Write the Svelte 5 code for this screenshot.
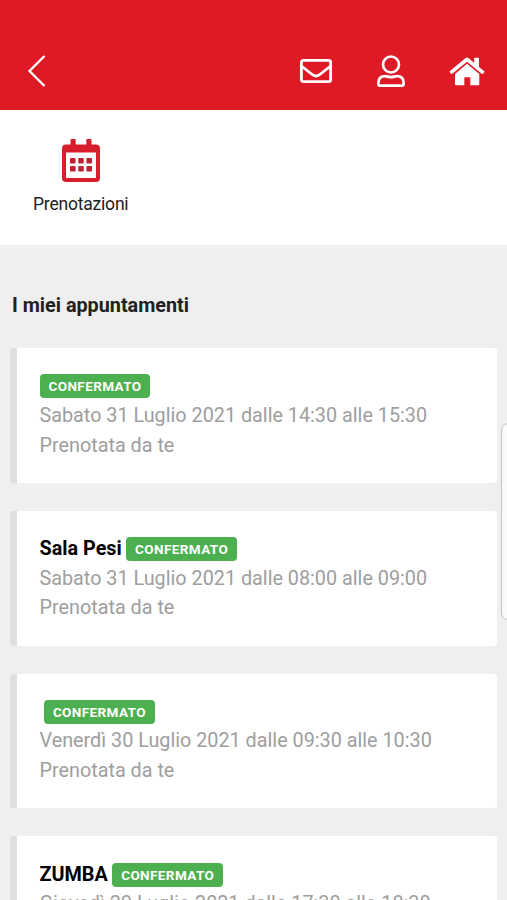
<script>
	const appointments = [
		{ title: '', date: 'Sabato 31 Luglio 2021 dalle 14:30 alle 15:30' },
		{ title: 'Sala Pesi', date: 'Sabato 31 Luglio 2021 dalle 08:00 alle 09:00' },
		{ title: '', date: 'Venerdì 30 Luglio 2021 dalle 09:30 alle 10:30', spaced: true },
		{ title: 'ZUMBA', date: 'Giovedì 29 Luglio 2021 dalle 17:30 alle 18:30' }
	];
</script>

<div class="screen">
	<header>
		<button class="back" aria-label="Indietro">
			<svg width="20" height="34" viewBox="0 0 20 34">
				<path d="M17.5 2 2.5 17l15 15" fill="none" stroke="#fff" stroke-width="2.3" />
			</svg>
		</button>
		<nav>
			<button aria-label="Messaggi">
				<svg width="32" height="24" viewBox="0 0 32 24" fill="none" stroke="#fff" stroke-width="2.8">
					<rect x="1.4" y="1.4" width="29.2" height="21.2" rx="1.8" />
					<path d="M2 7.5l10.2 8q3.8 3 7.6 0L30 7.5" />
				</svg>
			</button>
			<button aria-label="Profilo">
				<svg width="28" height="32" viewBox="0 0 28 32" fill="none" stroke="#fff" stroke-width="2.7">
					<circle cx="14" cy="9.5" r="8" />
					<path
						d="M8.3 21.2c2 0 3 .9 5.7.9s3.7-.9 5.7-.9c4.6 0 6.9 2.8 6.9 6.7v1.2q0 1.5-1.5 1.5H2.9q-1.5 0-1.5-1.5v-1.2c0-3.9 2.3-6.7 6.9-6.7z"
					/>
				</svg>
			</button>
			<button aria-label="Home">
				<svg width="36" height="29" viewBox="0 0 36 29" fill="#fff">
					<path d="M18 6.8 30.3 17v10.3q0 1-1 1H21.3v-8h-6v8H7q-1 0-1-1V17z" />
					<path
						d="M16.3 1.3q1.7-1.4 3.4 0l5.5 4.6V1.4q0-.7.7-.7H29.3q.7 0 .7.7v8.5l5 4.2q.7.6.1 1.3l-1.1 1.3q-.6.7-1.3.1L18 4.7 3.3 16.8q-.7.6-1.3-.1L.9 15.4q-.6-.7.1-1.3z"
					/>
				</svg>
			</button>
		</nav>
	</header>

	<section class="shortcuts">
		<a class="shortcut" href="#prenotazioni">
			<svg width="38" height="44" viewBox="0 0 38 44">
				<path
					fill="#d81e2c"
					fill-rule="evenodd"
					d="M8.5 1q0-1 1-1h3.2q1 0 1 1v4.5h10.6V1q0-1 1-1h3.2q1 0 1 1v4.5H34q4 0 4 4V39q0 4-4 4H4q-4 0-4-4V9.5q0-4 4-4h4.5zM4 13.5v24.7q0 .8.8.8h28.4q.8 0 .8-.8V13.5z"
				/>
				<g fill="#bd2132">
					{#each [8, 16.2, 24.4] as x}
						{#each [19, 27] as y}
							<rect {x} {y} width="5.6" height="5.6" rx="1" />
						{/each}
					{/each}
				</g>
			</svg>
			<span>Prenotazioni</span>
		</a>
	</section>

	<main>
		<h1>I miei appuntamenti</h1>
		<div class="list">
			{#each appointments as item}
				<article>
					<div class="title">
						{#if item.title}<strong>{item.title}</strong>{/if}
						<span class="badge" class:spaced={item.title || item.spaced}>CONFERMATO</span>
					</div>
					<p>{item.date}</p>
					<p>Prenotata da te</p>
				</article>
			{/each}
		</div>
	</main>

	<div class="edge-handle"></div>
</div>

<style>
	:global(body) {
		margin: 0;
		overflow: hidden;
	}

	.screen {
		position: relative;
		height: 900px;
		overflow: hidden;
		background: #efefef;
		color: #212121;
		font-family: Roboto, sans-serif;
	}

	header {
		box-sizing: border-box;
		height: 110px;
		padding: 32px 22px 0 27px;
		display: flex;
		align-items: center;
		justify-content: space-between;
		background: #de1a27;
	}

	button {
		display: flex;
		border: 0;
		padding: 0;
		background: none;
	}

	nav {
		display: flex;
		align-items: center;
		gap: 44.5px;
	}

	.shortcuts {
		box-sizing: border-box;
		height: 135px;
		padding: 28.5px 0 0 33px;
		display: flex;
		align-items: flex-start;
		background: #fff;
	}

	.shortcut {
		display: flex;
		flex-direction: column;
		align-items: center;
		gap: 10px;
		color: #212121;
		font-size: 17.5px;
		line-height: 22px;
		letter-spacing: -0.2px;
		text-decoration: none;
	}

	h1 {
		margin: 0;
		padding: 46.5px 12px 29.8px;
		font-size: 19.8px;
		line-height: 27px;
		font-weight: 700;
	}

	.list {
		display: flex;
		flex-direction: column;
		gap: 28px;
		padding: 0 10px;
	}

	article {
		box-sizing: border-box;
		height: 134.7px;
		padding: 22.7px 20px 0 22.5px;
		border-left: 7px solid #dfdfdf;
		border-radius: 3px;
		background: #fff;
	}

	.title {
		display: flex;
		align-items: center;
		height: 30px;
		color: #000;
		font-size: 19.8px;
	}

	strong {
		font-weight: 700;
	}

	.badge {
		padding: 0 8.6px 0 9px;
		border-radius: 4px;
		background: #4caf50;
		color: #fff;
		font-size: 13.5px;
		line-height: 24px;
		letter-spacing: 0.4px;
		font-weight: 700;
	}

	.spaced {
		margin-top: 1px;
		margin-left: 4.4px;
	}

	p {
		margin: 0;
		color: #9e9e9e;
		font-size: 19.8px;
		line-height: 29.6px;
		white-space: nowrap;
	}

	.edge-handle {
		position: absolute;
		top: 423px;
		right: -8px;
		box-sizing: border-box;
		width: 14px;
		height: 197px;
		border: 1.5px solid #c4c4c4;
		border-radius: 7px;
		background: #fafafa;
	}
</style>
